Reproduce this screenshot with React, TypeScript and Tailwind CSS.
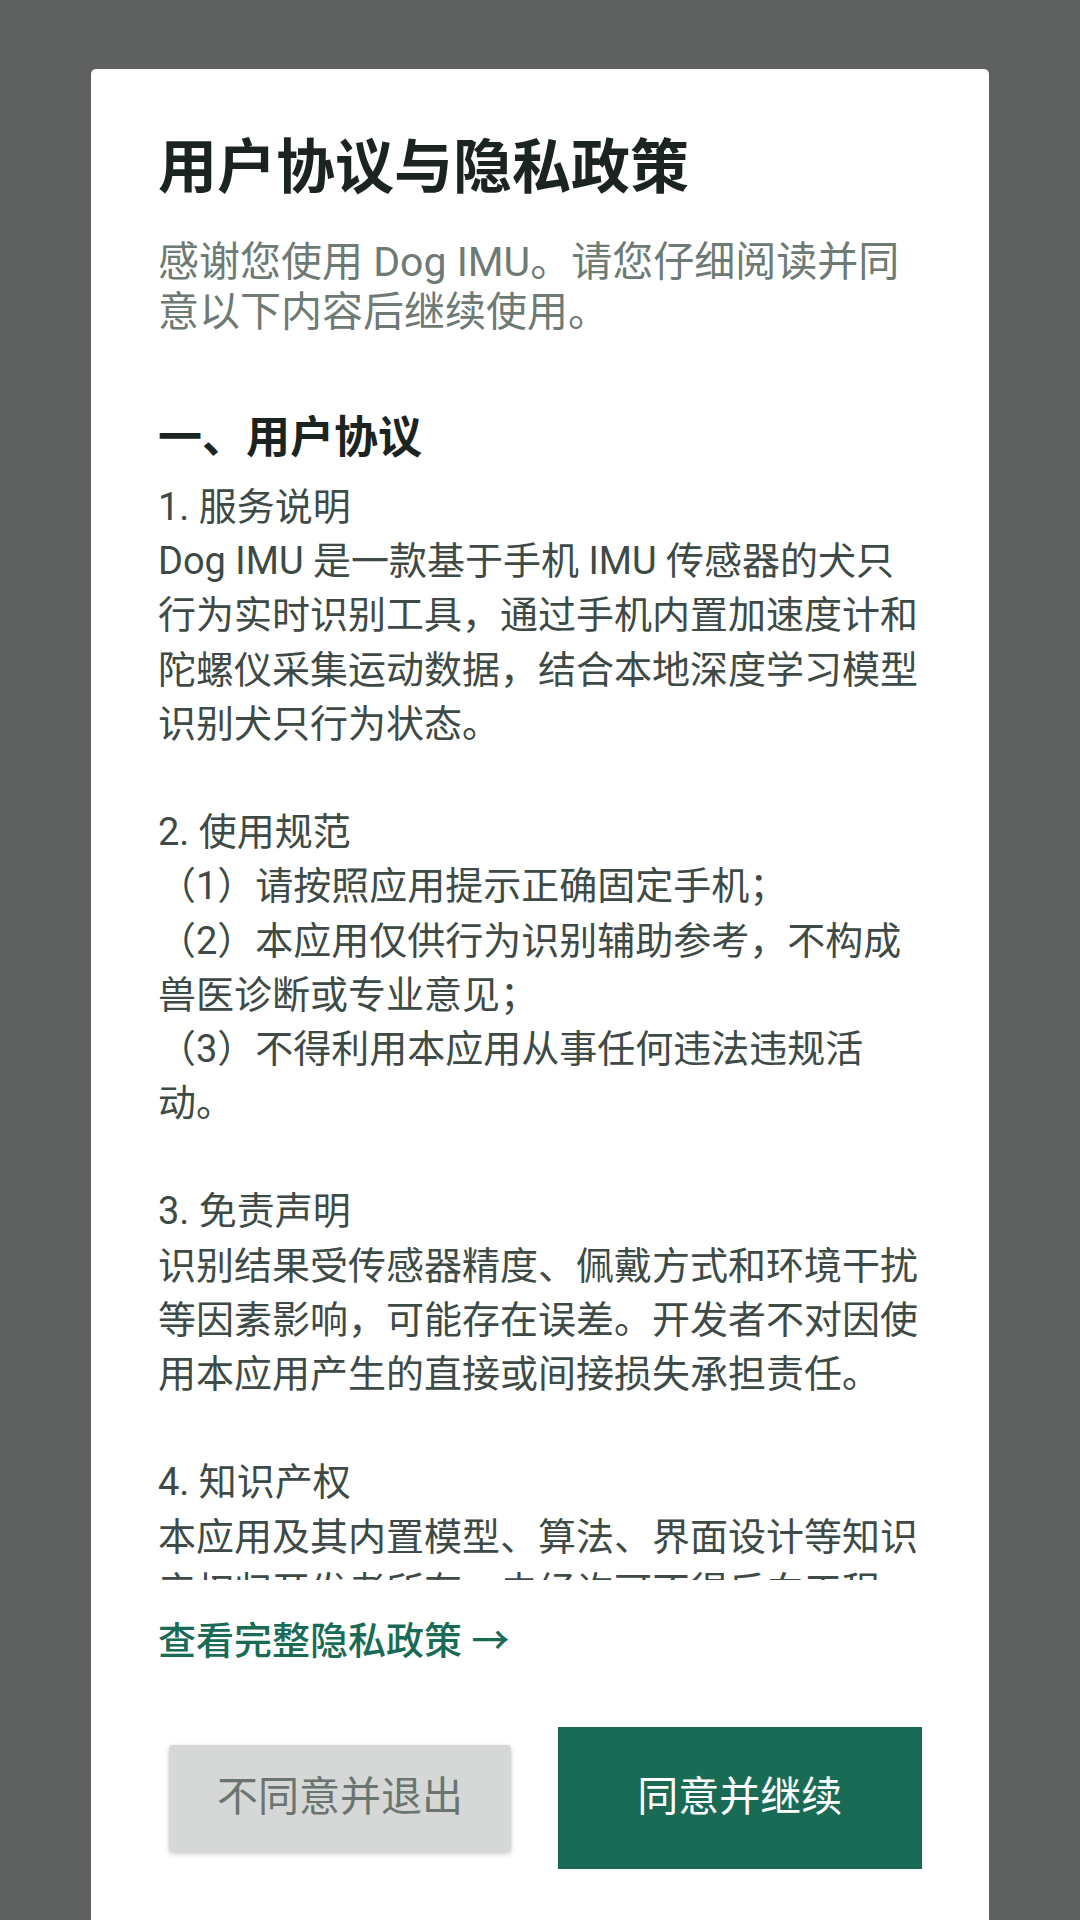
import React from 'react';

const lines = [
  '1. 服务说明',
  'Dog IMU 是一款基于手机 IMU 传感器的犬只',
  '行为实时识别工具，通过手机内置加速度计和',
  '陀螺仪采集运动数据，结合本地深度学习模型',
  '识别犬只行为状态。',
  '',
  '2. 使用规范',
  '（1）请按照应用提示正确固定手机；',
  '（2）本应用仅供行为识别辅助参考，不构成',
  '兽医诊断或专业意见；',
  '（3）不得利用本应用从事任何违法违规活',
  '动。',
  '',
  '3. 免责声明',
  '识别结果受传感器精度、佩戴方式和环境干扰',
  '等因素影响，可能存在误差。开发者不对因使',
  '用本应用产生的直接或间接损失承担责任。',
  '',
  '4. 知识产权',
  '本应用及其内置模型、算法、界面设计等知识',
  '产权归开发者所有，未经许可不得反向工程、',
];

export default function App() {
  return (
    <main className="h-[1920px] overflow-hidden bg-[#5f6160] pt-[69px] px-[91px] font-[Roboto,'Noto_Sans_CJK_SC',sans-serif]">
      {/* Dialog card */}
      <div className="h-[1900px] rounded-[5px] bg-white px-[67px] pt-[64px]">
        <h1 className="text-[59px] leading-[70px] font-bold text-[#1b2420] whitespace-nowrap">用户协议与隐私政策</h1>
        <p className="mt-[34px] text-[41px] leading-[50px] text-[#6e7a74] whitespace-nowrap">
          <span className="block">感谢您使用 Dog IMU。请您仔细阅读并同</span>
          <span className="block">意以下内容后继续使用。</span>
        </p>

        {/* Scrollable terms */}
        <div className="mt-[73px] h-[1170px] overflow-hidden">
          <h2 className="text-[44px] leading-[56px] font-bold text-[#1b2420]">一、用户协议</h2>
          <div className="mt-[14px] text-[38px] leading-[54.2px] text-[#3e4a45] whitespace-nowrap">
            {lines.map((l, i) => (
              <div key={i} className="h-[54.2px]">{l || '\u00a0'}</div>
            ))}
          </div>
        </div>

        <a className="mt-[36px] block text-[38px] leading-[50px] font-medium text-[#1a6b55] whitespace-nowrap">
          查看完整隐私政策 →
        </a>

        {/* Actions */}
        <div className="mt-[61px] flex items-center gap-[30px]">
          <div className="w-[370px] flex">
            <button className="ml-[11px] w-[342px] h-[107px] rounded-[4px] bg-[#d6d8d7] shadow-[0_2px_5px_rgba(0,0,0,0.22)] text-[41px] text-[#6b7570]">
              不同意并退出
            </button>
          </div>
          <button className="w-[365px] h-[142px] bg-[#1a6b55] text-[41px] text-white">同意并继续</button>
        </div>
      </div>
    </main>
  );
}
